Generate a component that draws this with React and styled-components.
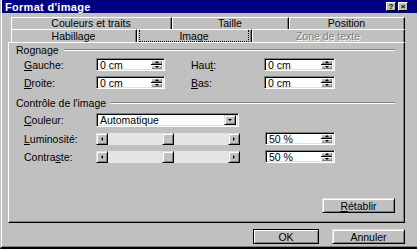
import React from 'react'
import styled, { createGlobalStyle } from 'styled-components'

const GlobalStyle = createGlobalStyle`
    html, body {
        margin: 0;
        padding: 0;
        background: #c0c0c0;
    }
    body {
        font-family: "Liberation Sans", Arial, sans-serif;
        font-size: 10.5px;
        color: #000;
    }
`

const Window = styled.div`
    width: 417px;
    height: 249px;
    box-sizing: border-box;
    background: #c0c0c0;
    border-left: 1px solid #c0c0c0;
    border-bottom: 2px solid #000;
    box-shadow: inset 1px 0 #fff, inset 0 -1px #808080;
    display: flex;
    flex-direction: column;
    overflow: hidden;
`

const TitleBar = styled.div`
    height: 13px;
    margin-left: 1px;
    background: #000080;
    color: #fff;
    font-weight: bold;
    font-size: 11px;
    letter-spacing: 0.3px;
    display: flex;
    align-items: center;
    justify-content: space-between;
    padding-left: 3px;
`

const TitleButtons = styled.div`
    display: flex;
    gap: 2px;
    margin-right: 9px;
`

const TitleButton = styled.div`
    width: 10px;
    height: 9px;
    box-sizing: border-box;
    background: #c0c0c0;
    border: 1px solid;
    border-color: #fff #000 #000 #fff;
    color: #000;
    font-size: 8px;
    line-height: 7px;
    text-align: center;
    font-weight: bold;
    letter-spacing: 0;
`

const Main = styled.div`
    padding: 4px 0 0 7px;
    width: 397px;
    display: flex;
    flex-direction: column;
`

const TabRows = styled.div`
    margin-left: 3px;
    display: flex;
    flex-direction: column;
`

const TabRow = styled.div`
    display: flex;
    height: ${p => p.$h}px;
`

const Tab = styled.div`
    width: ${p => p.$w}px;
    box-sizing: border-box;
    border-top: 1px solid #fff;
    border-left: 1px solid #fff;
    border-right: 1px solid #000;
    box-shadow: inset -1px 0 #808080;
    display: flex;
    line-height: 10px;
    color: ${p => p.$disabled ? '#808080' : '#000'};
    text-shadow: ${p => p.$disabled ? '1px 1px #fff' : 'none'};
    padding: 0 2px 0 1px;
`

const Focus = styled.div`
    flex: 1;
    display: flex;
    align-items: center;
    justify-content: center;
    box-sizing: border-box;
    border: ${p => p.$on ? '1px dotted #000' : '1px solid transparent'};
    border-top-width: 0;
    white-space: nowrap;
`

const Panel = styled.div`
    height: 181px;
    box-sizing: border-box;
    border-top: 1px solid #fff;
    border-left: 1px solid #fff;
    border-right: 1px solid #000;
    border-bottom: 1px solid #000;
    box-shadow: inset -1px -1px #808080;
    display: flex;
    flex-direction: column;
    padding-right: 9px;
`

const GroupHeader = styled.div`
    height: 13px;
    margin-top: ${p => p.$top}px;
    padding-left: 7px;
    display: flex;
    align-items: center;
`

const Groove = styled.div`
    flex: 1;
    margin-left: 5px;
    border-top: 1px solid #808080;
    border-bottom: 1px solid #fff;
`

const Row = styled.div`
    display: flex;
    align-items: center;
    margin-top: ${p => p.$top}px;
    padding-left: 15px;
    height: ${p => p.$h || 13}px;
`

const Label = styled.div`
    width: ${p => p.$w}px;
    margin-left: ${p => p.$gap || 0}px;
    flex-shrink: 0;
`

const Sunken = styled.div`
    width: ${p => p.$w}px;
    height: ${p => p.$h || 13}px;
    box-sizing: border-box;
    margin-left: ${p => p.$gap || 0}px;
    background: #fff;
    border-top: 1px solid #808080;
    border-left: 1px solid #808080;
    border-bottom: 1px solid #fff;
    border-right: 1px solid #fff;
    box-shadow: inset 1px 1px #000, inset -1px -1px #dfdfdf;
    display: flex;
    align-items: center;
    padding: 1px 2px 1px 3px;
`

const FieldText = styled.div`
    flex: 1;
    white-space: nowrap;
`

const SpinStack = styled.div`
    display: flex;
    flex-direction: column;
    width: 11px;
    align-self: stretch;
    gap: 1px;
    background: #000;
`

const Raised = styled.div`
    box-sizing: border-box;
    background: #c0c0c0;
    border: 1px solid;
    border-color: #dfdfdf #000 #000 #dfdfdf;
    box-shadow: inset 1px 1px #fff, inset -1px -1px #808080;
    display: flex;
    align-items: center;
    justify-content: center;
`

const SpinButton = styled.div`
    flex: 1;
    background: #c0c0c0;
    box-shadow: inset 1px 1px #fff, inset -1px -1px #808080;
    display: flex;
    align-items: center;
    justify-content: center;
`

const Arrow = styled.div`
    width: 0;
    height: 0;
    border: 2px solid transparent;
    ${p => p.$dir === 'up' && 'border-bottom-color: #000; border-top-width: 0;'}
    ${p => p.$dir === 'down' && 'border-top-color: #000; border-bottom-width: 0;'}
    ${p => p.$dir === 'left' && 'border-right-color: #000; border-left-width: 0;'}
    ${p => p.$dir === 'right' && 'border-left-color: #000; border-right-width: 0;'}
`

const DropButton = styled(Raised)`
    width: 12px;
    height: 10px;
`

const Slider = styled.div`
    width: ${p => p.$w}px;
    height: 12px;
    display: flex;
    background-color: #e4e4e4;
    background-image: radial-gradient(#c8c8c8 0.5px, transparent 0.6px);
    background-size: 2px 2px;
`

const SliderButton = styled(Raised)`
    width: 12px;
    height: 12px;
    flex-shrink: 0;
`

const Track = styled.div`
    flex: 1;
    display: flex;
`

const Thumb = styled(Raised)`
    width: 12px;
    height: 12px;
`

const BottomRow = styled.div`
    margin-top: auto;
    margin-bottom: 9px;
    display: flex;
    justify-content: flex-end;
`

const Button = styled(Raised)`
    width: ${p => p.$w}px;
    height: 15px;
    margin-left: ${p => p.$gap || 0}px;
    border-color: ${p => p.$default ? '#000' : '#dfdfdf #000 #000 #dfdfdf'};
`

const Footer = styled.div`
    margin-top: 6px;
    display: flex;
    justify-content: flex-end;
`

const Key = styled.span`
    text-decoration: underline;
`

function SpinField({ w, gap, value }) {
    return (
        <Sunken $w={w} $gap={gap}>
            <FieldText>{value}</FieldText>
            <SpinStack>
                <SpinButton><Arrow $dir="up" /></SpinButton>
                <SpinButton><Arrow $dir="down" /></SpinButton>
            </SpinStack>
        </Sunken>
    )
}

function TrackBar({ w, value }) {
    const pos = Math.round((w - 24 - 12) * value / 100)
    return (
        <Slider $w={w}>
            <SliderButton><Arrow $dir="left" /></SliderButton>
            <Track>
                <Thumb style={{ marginLeft: pos }} />
            </Track>
            <SliderButton><Arrow $dir="right" /></SliderButton>
        </Slider>
    )
}

const tabsBack = [
    { label: 'Couleurs et traits', w: 161 },
    { label: 'Taille', w: 117 },
    { label: 'Position', w: 116 },
]

const tabsFront = [
    { label: 'Habillage', w: 126 },
    { label: 'Image', w: 115, active: true },
    { label: 'Zone de texte', w: 153, disabled: true },
]

export default function App() {
    return (
        <>
            <GlobalStyle />
            <Window>
                <TitleBar>
                    <span>Format d'image</span>
                    <TitleButtons>
                        <TitleButton>?</TitleButton>
                        <TitleButton>×</TitleButton>
                    </TitleButtons>
                </TitleBar>

                <Main>
                    <TabRows>
                        <TabRow $h={12}>
                            {tabsBack.map(t =>
                                <Tab key={t.label} $w={t.w}><Focus>{t.label}</Focus></Tab>
                            )}
                        </TabRow>
                        <TabRow $h={13}>
                            {tabsFront.map(t =>
                                <Tab key={t.label} $w={t.w} $disabled={t.disabled}>
                                    <Focus $on={t.active}>{t.label}</Focus>
                                </Tab>
                            )}
                        </TabRow>
                    </TabRows>

                    <Panel>
                        <GroupHeader $top={0}>
                            Rognage<Groove />
                        </GroupHeader>
                        <Row $top={2}>
                            <Label $w={72}><Key>G</Key>auche:</Label>
                            <SpinField w={69} value="0 cm" />
                            <Label $w={73} $gap={26}>Hau<Key>t</Key>:</Label>
                            <SpinField w={71} value="0 cm" />
                        </Row>
                        <Row $top={5}>
                            <Label $w={72}><Key>D</Key>roite:</Label>
                            <SpinField w={69} value="0 cm" />
                            <Label $w={73} $gap={26}><Key>B</Key>as:</Label>
                            <SpinField w={71} value="0 cm" />
                        </Row>

                        <GroupHeader $top={7}>
                            Contrôle de l'image<Groove />
                        </GroupHeader>
                        <Row $top={4} $h={14}>
                            <Label $w={72}><Key>C</Key>ouleur:</Label>
                            <Sunken $w={143} $h={14}>
                                <FieldText>Automatique</FieldText>
                                <DropButton><Arrow $dir="down" /></DropButton>
                            </Sunken>
                        </Row>
                        <Row $top={5}>
                            <Label $w={72}><Key>L</Key>uminosité:</Label>
                            <TrackBar w={144} value={50} />
                            <SpinField w={70} gap={25} value="50 %" />
                        </Row>
                        <Row $top={5}>
                            <Label $w={72}>Contra<Key>s</Key>te:</Label>
                            <TrackBar w={144} value={50} />
                            <SpinField w={70} gap={25} value="50 %" />
                        </Row>

                        <BottomRow>
                            <Button $w={73}><span><Key>R</Key>établir</span></Button>
                        </BottomRow>
                    </Panel>

                    <Footer>
                        <Button $w={66} $default>OK</Button>
                        <Button $w={73} $gap={13}>Annuler</Button>
                    </Footer>
                </Main>
            </Window>
        </>
    )
}
